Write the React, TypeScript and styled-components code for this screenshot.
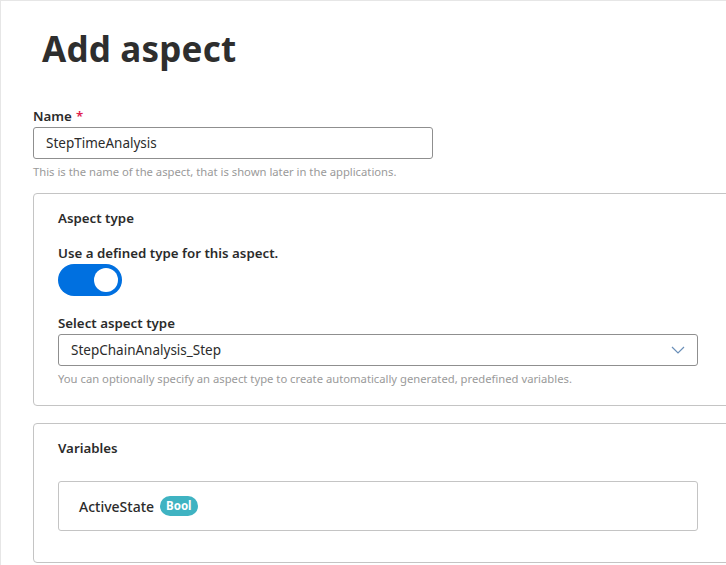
import React from "react";
import styled, { createGlobalStyle } from "styled-components";

const Global = createGlobalStyle`
  html, body { margin: 0; padding: 0; background: #fff; overflow: hidden; }
  body { font-family: "Noto Sans", "Open Sans", sans-serif; color: #2c2c2c; }
  * { box-sizing: border-box; }
`;

const Page = styled.div`
  width: 726px;
  height: 565px;
  border-top: 1px solid #e6e6e6;
  border-left: 1px solid #e6e6e6;
  padding: 0 0 0 32px;
  overflow: hidden;
`;

const Title = styled.h1`
  margin: 23px 0 0 9px;
  font-size: 35px;
  line-height: 50px;
  font-weight: 700;
  color: #2e2e2e;
  letter-spacing: 0.2px;
`;

const Field = styled.div<{ $width?: number }>`
  display: flex;
  flex-direction: column;
  width: ${(p) => (p.$width ? `${p.$width}px` : "auto")};
  margin-top: 33px;
`;

const Label = styled.label<{ $gap?: number }>`
  font-size: 13.3px;
  font-weight: 600;
  color: #2b2b2b;
  line-height: 18px;
  margin-bottom: ${(p) => p.$gap ?? 4}px;
`;

const Required = styled.span`
  color: #e0204d;
  margin-left: 4px;
`;

const Input = styled.div`
  height: 32px;
  border: 1px solid #8f8f8f;
  border-radius: 3px;
  display: flex;
  align-items: center;
  padding: 0 12px;
  font-size: 13.5px;
  color: #2b2b2b;
  justify-content: space-between;
`;

const Help = styled.div`
  font-size: 11.25px;
  color: #9a9a9a;
  margin-top: 5px;
  line-height: 16px;
`;

const Card = styled.section<{ $height: number; $top: number }>`
  margin-top: ${(p) => p.$top}px;
  width: 720px;
  height: ${(p) => p.$height}px;
  border: 1px solid #c4c4c4;
  border-radius: 4px;
  padding: 15px 0 0 24px;
  display: flex;
  flex-direction: column;
`;

const CardTitle = styled.h2`
  margin: 0;
  font-size: 13.3px;
  font-weight: 600;
  line-height: 18px;
  color: #2b2b2b;
`;

const ToggleTrack = styled.div<{ $on: boolean }>`
  width: 64px;
  height: 32px;
  border-radius: 16px;
  background: ${(p) => (p.$on ? "#0070e0" : "#bbb")};
  display: flex;
  align-items: center;
  justify-content: ${(p) => (p.$on ? "flex-end" : "flex-start")};
  padding: 0 4px;
`;

const Knob = styled.div`
  width: 24px;
  height: 24px;
  border-radius: 50%;
  background: #fff;
`;

const Section = styled.div<{ $top: number }>`
  margin-top: ${(p) => p.$top}px;
  display: flex;
  flex-direction: column;
  width: 640px;
`;

const VarBox = styled.div`
  margin-top: 24px;
  width: 640px;
  height: 50px;
  border: 1px solid #c4c4c4;
  border-radius: 3px;
  display: flex;
  align-items: center;
  padding: 0 20px;
  gap: 6px;
`;

const VarName = styled.span`
  font-size: 14px;
  font-weight: 500;
  color: #2b2b2b;
`;

const Badge = styled.span`
  background: #3fb3c2;
  color: #fff;
  font-size: 11.5px;
  font-weight: 700;
  border-radius: 10px;
  height: 20px;
  line-height: 20px;
  padding: 0 6px;
`;

export default function App() {
  return (
    <>
      <Global />
      <Page>
        <Title>Add aspect</Title>
        <Field $width={400}>
          <Label $gap={2}>
            Name<Required>*</Required>
          </Label>
          <Input>StepTimeAnalysis</Input>
          <Help>This is the name of the aspect, that is shown later in the applications.</Help>
        </Field>
        <Card $top={13} $height={213}>
          <CardTitle>Aspect type</CardTitle>
          <Section $top={17}>
            <Label $gap={2}>Use a defined type for this aspect.</Label>
            <ToggleTrack $on>
              <Knob />
            </ToggleTrack>
          </Section>
          <Section $top={18}>
            <Label $gap={2}>Select aspect type</Label>
            <Input>
              StepChainAnalysis_Step
              <svg width="14" height="8" viewBox="0 0 14 8">
                <path d="M1 1l6 6 6-6" fill="none" stroke="#6a8fb8" strokeWidth="1.2" />
              </svg>
            </Input>
            <Help>You can optionally specify an aspect type to create automatically generated, predefined variables.</Help>
          </Section>
        </Card>
        <Card $top={17} $height={140}>
          <CardTitle>Variables</CardTitle>
          <VarBox>
            <VarName>ActiveState</VarName>
            <Badge>Bool</Badge>
          </VarBox>
        </Card>
      </Page>
    </>
  );
}
